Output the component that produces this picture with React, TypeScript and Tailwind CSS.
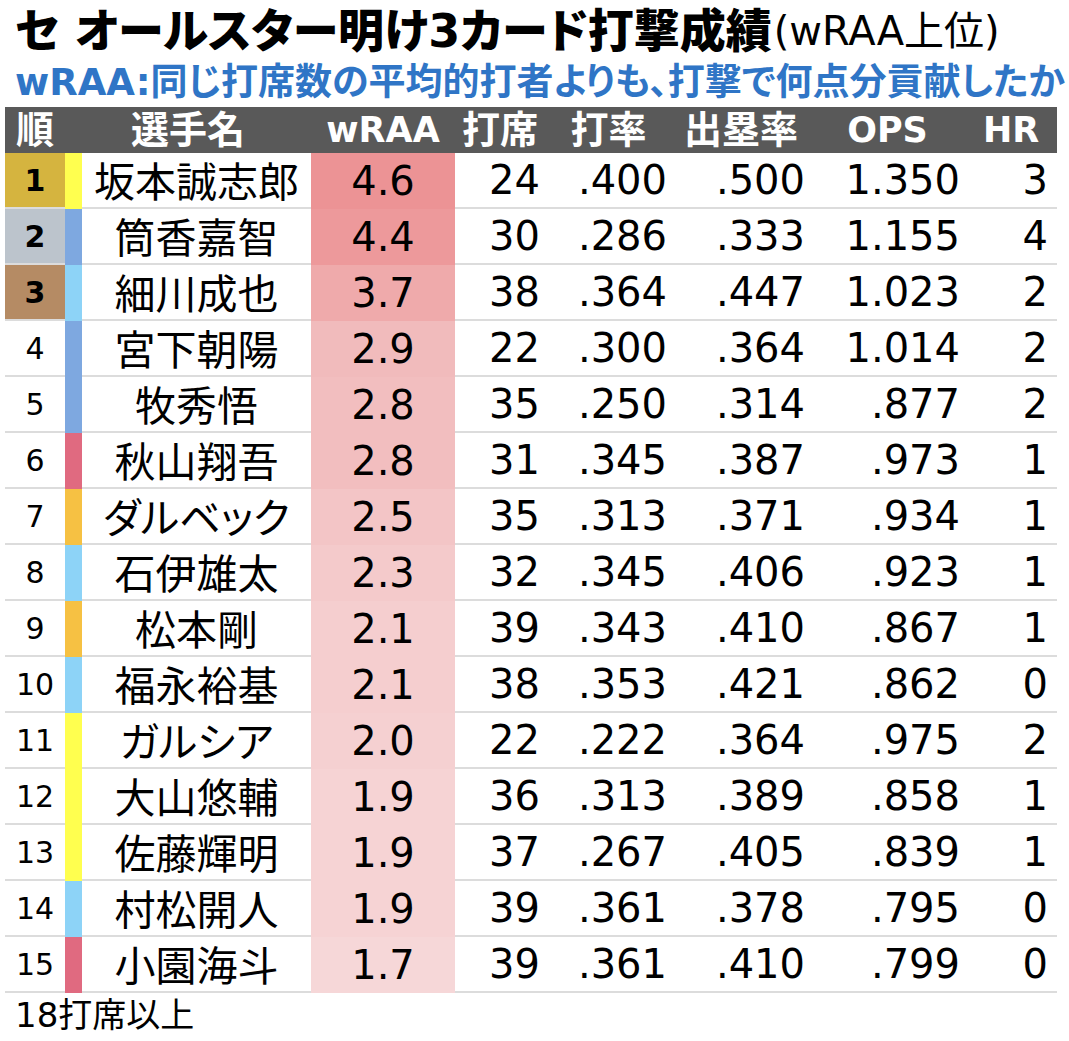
import React from 'react';

type Row = {
  rank: number;
  team: string;
  name: string;
  wraa: string;
  heat: string;
  pa: string;
  avg: string;
  obp: string;
  ops: string;
  hr: string;
};

// team colours for the stripe next to the rank
const T = 'bg-[#ffff4f]'; // 阪神
const B = 'bg-[#7ea8e0]'; // DeNA
const D = 'bg-[#8dd3f7]'; // 中日
const C = 'bg-[#e06a80]'; // 広島
const G = 'bg-[#f6c143]'; // 巨人

const rows: Row[] = [
  { rank: 1, team: T, name: '坂本誠志郎', wraa: '4.6', heat: 'bg-[#ec9395]', pa: '24', avg: '.400', obp: '.500', ops: '1.350', hr: '3' },
  { rank: 2, team: B, name: '筒香嘉智', wraa: '4.4', heat: 'bg-[#ed999b]', pa: '30', avg: '.286', obp: '.333', ops: '1.155', hr: '4' },
  { rank: 3, team: D, name: '細川成也', wraa: '3.7', heat: 'bg-[#efaaab]', pa: '38', avg: '.364', obp: '.447', ops: '1.023', hr: '2' },
  { rank: 4, team: B, name: '宮下朝陽', wraa: '2.9', heat: 'bg-[#f1bbbc]', pa: '22', avg: '.300', obp: '.364', ops: '1.014', hr: '2' },
  { rank: 5, team: B, name: '牧秀悟', wraa: '2.8', heat: 'bg-[#f2bebf]', pa: '35', avg: '.250', obp: '.314', ops: '.877', hr: '2' },
  { rank: 6, team: C, name: '秋山翔吾', wraa: '2.8', heat: 'bg-[#f2bebf]', pa: '31', avg: '.345', obp: '.387', ops: '.973', hr: '1' },
  { rank: 7, team: G, name: 'ダルベック', wraa: '2.5', heat: 'bg-[#f3c5c6]', pa: '35', avg: '.313', obp: '.371', ops: '.934', hr: '1' },
  { rank: 8, team: D, name: '石伊雄太', wraa: '2.3', heat: 'bg-[#f4cacb]', pa: '32', avg: '.345', obp: '.406', ops: '.923', hr: '1' },
  { rank: 9, team: G, name: '松本剛', wraa: '2.1', heat: 'bg-[#f5cecf]', pa: '39', avg: '.343', obp: '.410', ops: '.867', hr: '1' },
  { rank: 10, team: D, name: '福永裕基', wraa: '2.1', heat: 'bg-[#f5cecf]', pa: '38', avg: '.353', obp: '.421', ops: '.862', hr: '0' },
  { rank: 11, team: T, name: 'ガルシア', wraa: '2.0', heat: 'bg-[#f5d0d1]', pa: '22', avg: '.222', obp: '.364', ops: '.975', hr: '2' },
  { rank: 12, team: T, name: '大山悠輔', wraa: '1.9', heat: 'bg-[#f6d3d4]', pa: '36', avg: '.313', obp: '.389', ops: '.858', hr: '1' },
  { rank: 13, team: T, name: '佐藤輝明', wraa: '1.9', heat: 'bg-[#f6d3d4]', pa: '37', avg: '.267', obp: '.405', ops: '.839', hr: '1' },
  { rank: 14, team: D, name: '村松開人', wraa: '1.9', heat: 'bg-[#f6d3d4]', pa: '39', avg: '.361', obp: '.378', ops: '.795', hr: '0' },
  { rank: 15, team: C, name: '小園海斗', wraa: '1.7', heat: 'bg-[#f6d7d8]', pa: '39', avg: '.361', obp: '.410', ops: '.799', hr: '0' },
];

const medal: Record<number, string> = {
  1: 'bg-[#d5b43f] font-bold',
  2: 'bg-[#bcc4cc] font-bold',
  3: 'bg-[#b58b64] font-bold',
};

const line = 'border-b-2 border-[#dcdcdc]';
const num = `flex items-center justify-end pr-[5px] ${line}`;

export default function App() {
  return (
    <div className="w-[1069px] h-[1041px] bg-white text-black font-['DejaVu_Sans','Noto_Sans_CJK_JP',sans-serif] [font-feature-settings:'palt'] overflow-hidden">
      <h1 className="pl-[15px] h-[62px] flex items-center whitespace-nowrap">
        <span className="text-[46px] font-black">セ オールスター明け3カード打撃成績</span>
        <span className="text-[40px] font-normal ml-[2px]">(wRAA上位)</span>
      </h1>
      <p className="pl-[15px] h-[42px] flex items-center text-[37px] font-bold text-[#2f75c6] whitespace-nowrap">
        wRAA:同じ打席数の平均的打者よりも、打撃で何点分貢献したか
      </p>

      <div className="ml-[5px] mt-[3px] w-[1052px]">
        <div className="flex h-[46px] bg-[#595959] text-white font-bold">
          <div className="w-[60px] flex items-center justify-center text-[38px]">順</div>
          <div className="w-[246px] flex items-center justify-center text-[38px]">選手名</div>
          <div className="w-[144px] flex items-center justify-center text-[35px]">wRAA</div>
          <div className="w-[90px] flex items-center justify-center text-[38px]">打席</div>
          <div className="w-[127px] flex items-center justify-center text-[38px]">打率</div>
          <div className="w-[138px] flex items-center justify-center text-[38px]">出塁率</div>
          <div className="w-[155px] flex items-center justify-center text-[35px]">OPS</div>
          <div className="w-[92px] flex items-center justify-center text-[35px]">HR</div>
        </div>

        {rows.map((r) => (
          <div key={r.rank} className="flex h-[56px] text-[40px]">
            <div className={`w-[60px] flex items-center justify-center text-[30px] ${medal[r.rank] ?? ''} ${line}`}>
              {r.rank}
            </div>
            <div className={`w-[17px] ${r.team}`} />
            <div className={`w-[229px] flex items-center justify-center text-[41px] font-['Noto_Sans_CJK_JP',sans-serif] ${line}`}>
              {r.name}
            </div>
            <div className={`w-[144px] flex items-center justify-center ${r.heat}`}>{r.wraa}</div>
            <div className={`w-[90px] ${num}`}>{r.pa}</div>
            <div className={`w-[127px] ${num}`}>{r.avg}</div>
            <div className={`w-[138px] ${num}`}>{r.obp}</div>
            <div className={`w-[155px] ${num}`}>{r.ops}</div>
            <div className={`w-[92px] ${num} pr-[9px]`}>{r.hr}</div>
          </div>
        ))}
      </div>

      <p className="pl-[15px] h-[44px] flex items-center text-[34px]">18打席以上</p>
    </div>
  );
}
